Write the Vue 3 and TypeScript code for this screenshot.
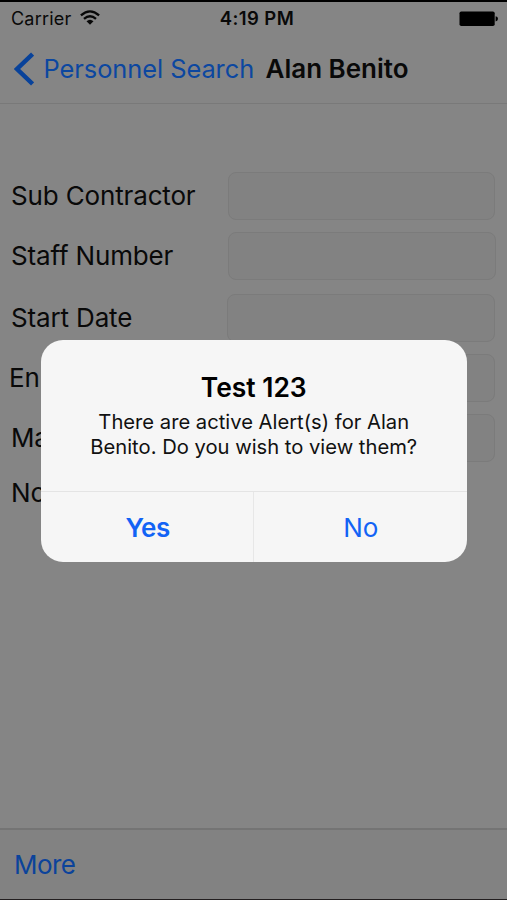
<script setup lang="ts">
interface FieldRow {
  label: string
  kind: string
  boxed: boolean
}

const rows: FieldRow[] = [
  { label: 'Sub Contractor', kind: 'contractor', boxed: true },
  { label: 'Staff Number', kind: 'staff', boxed: true },
  { label: 'Start Date', kind: 'start', boxed: true },
  { label: 'En', kind: 'en', boxed: true },
  { label: 'Ma', kind: 'ma', boxed: true },
  { label: 'No', kind: 'no-field', boxed: false },
]
</script>

<template>
  <div class="phone">
    <header class="top">
      <div class="status">
        <div class="carrier">
          <span>Carrier</span>
          <svg class="wifi" width="20" height="16" viewBox="0 0 20 16">
            <g fill="none" stroke="#080808" stroke-width="2.3">
              <path d="M0.9 5.4 Q10 -2.6 19.1 5.4" />
              <path d="M4 8.8 Q10 3.6 16 8.8" />
            </g>
            <path d="M6.5 11.3 Q10 8.3 13.5 11.3 L10 14.8Z" fill="#080808" />
          </svg>
        </div>
        <span class="time">4:19 PM</span>
        <svg class="battery" width="40" height="16" viewBox="0 0 40 16">
          <rect x="0.5" y="0.5" width="35.2" height="14.6" rx="1.8" fill="#000" />
          <path d="M36.6 5.2 Q39 5.6 39 7.8 Q39 10 36.6 10.4Z" fill="#000" />
        </svg>
      </div>
      <nav class="nav">
        <svg class="chevron" width="20" height="34" viewBox="0 0 20 34">
          <path d="M18.6 2 L3 17 L18.6 32" fill="none" stroke="#08429a" stroke-width="4.5" />
        </svg>
        <span class="back">Personnel Search</span>
        <span class="title">Alan Benito</span>
      </nav>
    </header>

    <main class="form">
      <div v-for="row in rows" :key="row.kind" class="row" :class="row.kind">
        <span class="label">{{ row.label }}</span>
        <span v-if="row.boxed" class="field"></span>
      </div>
    </main>

    <footer class="toolbar"><span class="more">More</span></footer>

    <section class="alert" role="alertdialog">
      <div class="content">
        <h1>Test 123</h1>
        <p><span class="line">There are active Alert(s) for Alan</span><span class="line">Benito. Do you wish to view them?</span></p>
      </div>
      <div class="actions">
        <button class="yes" type="button"><span>Yes</span></button>
        <button class="no" type="button"><span>No</span></button>
      </div>
    </section>
  </div>
</template>

<style>
body {
  margin: 0;
  background: #858585;
}
</style>

<style scoped>
.phone {
  position: relative;
  box-sizing: border-box;
  display: flex;
  flex-direction: column;
  width: 507px;
  height: 900px;
  overflow: hidden;
  border-top: 2px solid #000;
  border-bottom: 1px solid #231f20;
  background: #858585;
  color: #090909;
  font-family: Inter, "Liberation Sans", sans-serif;
  white-space: nowrap;
}
.top {
  box-sizing: border-box;
  height: 102px;
  border-bottom: 1px solid #797979;
}
.status {
  display: grid;
  grid-template-columns: 208px 98px 1fr;
  align-items: center;
  height: 33px;
}
.carrier {
  display: flex;
  align-items: center;
  gap: 9px;
  padding-left: 11px;
  font-size: 18px;
  letter-spacing: 0.2px;
  line-height: 33px;
}
.wifi {
  margin-bottom: 2px;
}
.time {
  text-align: center;
  font-size: 18.5px;
  font-weight: 600;
  letter-spacing: 0.4px;
  line-height: 33px;
}
.battery {
  justify-self: end;
  margin-right: 8px;
}
.nav {
  display: flex;
  align-items: center;
  height: 67px;
  padding-left: 14px;
}
.back {
  width: 222px;
  margin-left: 9.5px;
  color: #0c47a0;
  font-size: 25.4px;
  letter-spacing: -0.05px;
  line-height: 32px;
}
.title {
  font-size: 26px;
  font-weight: 600;
  line-height: 32px;
}
.form {
  flex: 1;
  padding-top: 68px;
}
.row {
  display: flex;
  align-items: center;
  height: 48px;
  margin-bottom: 12px;
  padding-left: 11px;
}
.label {
  width: 217px;
  font-size: 26px;
  letter-spacing: -0.15px;
  line-height: 48px;
}
.field {
  box-sizing: border-box;
  width: 267px;
  height: 48px;
  border: 1px solid #7b7b7b;
  border-radius: 8px;
  background: #828282;
}
.staff {
  margin-bottom: 14px;
}
.staff .field {
  width: 268px;
}
.start .label {
  width: 216px;
}
.start .field {
  width: 268px;
}
.en {
  margin-bottom: 12px;
  padding-left: 9px;
}
.en .label {
  width: 219px;
}
.ma {
  margin-bottom: 7px;
}
.toolbar {
  box-sizing: border-box;
  height: 71px;
  padding-left: 14px;
  border-top: 2px solid #747474;
  background: #828282;
}
.more {
  color: #0b439b;
  font-size: 26px;
  letter-spacing: -0.6px;
  line-height: 70px;
}
.alert {
  position: absolute;
  top: 338px;
  left: 40.5px;
  display: flex;
  flex-direction: column;
  width: 426.5px;
  height: 221.5px;
  overflow: hidden;
  border-radius: 22px;
  background: #f6f6f6;
  color: #000;
}
.content {
  box-sizing: border-box;
  height: 151px;
  padding-top: 31px;
  text-align: center;
}
h1 {
  margin: 0;
  font-size: 26.4px;
  font-weight: 600;
  line-height: 32px;
}
p {
  margin: 6px 0 0;
  color: #111;
  font-size: 20.2px;
}
.line {
  display: block;
  line-height: 25px;
}
.actions {
  display: grid;
  grid-template-columns: 1fr 1fr;
  flex: 1;
  border-top: 1px solid #e4e4e4;
}
button {
  padding: 2px 0 0;
  border: 0;
  background: transparent;
  color: #1263f5;
  font: 26px Inter, "Liberation Sans", sans-serif;
}
.yes {
  padding-left: 2px;
  border-right: 1px solid #e7e7e7;
  font-weight: 600;
  letter-spacing: -0.4px;
}
.no {
  padding-left: 1px;
}
</style>
